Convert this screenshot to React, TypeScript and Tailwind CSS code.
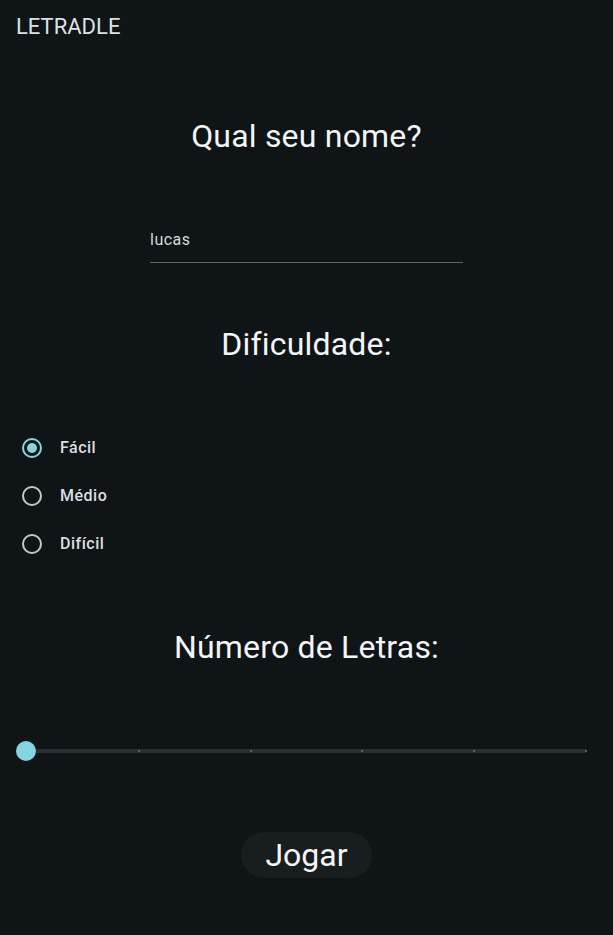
import React, { useState } from 'react';

const levels = ['Fácil', 'Médio', 'Difícil'];

export default function App() {
  const [name, setName] = useState('lucas');
  const [level, setLevel] = useState('Fácil');

  return (
    <div
      className="min-h-[935px] w-full bg-[#0f1417] text-white flex flex-col"
      style={{ fontFamily: 'Roboto, "Noto Sans", sans-serif' }}
    >
      {/* Top bar */}
      <header className="pt-[13px] pl-4 h-[41px]">
        <span className="text-[22px] leading-[28px] text-[#dde1e4]">LETRADLE</span>
      </header>

      <h2 className="mt-[75px] text-center text-[32px] leading-[40px] tracking-[0.2px] text-[#f3f5f6]">Qual seu nome?</h2>

      <div className="mt-[72px] mx-auto w-[313px] border-b border-[#5f6467] pb-[10px]">
        <input
          value={name}
          onChange={(e) => setName(e.target.value)}
          className="w-full bg-transparent outline-none text-[16px] leading-[24px] tracking-[0.5px] text-[#d6d9dc]"
        />
      </div>

      <h2 className="mt-[61px] text-center text-[32px] leading-[40px] tracking-[0.2px] text-[#f3f5f6]">Dificuldade:</h2>

      <div className="mt-[60px] flex flex-col">
        {levels.map((l) => {
          const active = l === level;
          return (
            <button
              key={l}
              type="button"
              onClick={() => setLevel(l)}
              className="h-12 flex items-center pl-[22px] text-left"
            >
              <span
                className={`w-5 h-5 rounded-full border-2 flex items-center justify-center ${
                  active ? 'border-[#85d5e1]' : 'border-[#c4c8cb]'
                }`}
              >
                {active && <span className="w-[10px] h-[10px] rounded-full bg-[#85d5e1]" />}
              </span>
              <span className="ml-[18px] text-[16px] font-medium tracking-[0.5px] text-[#dcdfe2]">{l}</span>
            </button>
          );
        })}
      </div>

      <h2 className="mt-[59px] text-center text-[32px] leading-[40px] tracking-[0.2px] text-[#f3f5f6]">Número de Letras:</h2>

      {/* Slider */}
      <div className="mt-[74px] px-4">
        <div className="relative h-5 mx-[10px] flex items-center">
          <div className="h-1 w-full rounded-full bg-[#2a3033] flex items-center justify-between">
            {[0, 1, 2, 3, 4, 5].map((i) => (
              <span key={i} className="w-[2px] h-[2px] rounded-full bg-[#6b7276]" />
            ))}
          </div>
          <span className="absolute left-[-10px] top-0 w-5 h-5 rounded-full bg-[#85d5e1]" />
        </div>
      </div>

      <div className="mt-[71px] flex justify-center">
        <button
          type="button"
          className="h-[46px] w-[131px] rounded-full bg-[#181d20] text-[32px] leading-[40px] text-[#f5f6f7]"
        >
          Jogar
        </button>
      </div>
    </div>
  );
}
